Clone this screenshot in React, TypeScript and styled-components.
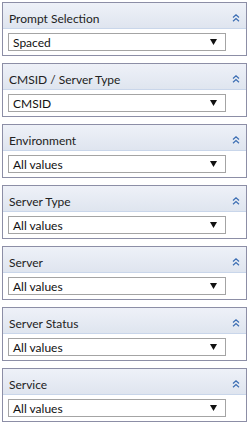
import React from 'react';
import styled, { createGlobalStyle } from 'styled-components';

const GlobalStyle = createGlobalStyle`
  html, body {
    margin: 0;
    padding: 0;
    background: #ffffff;
  }
  body {
    font-family: Lato, 'Liberation Sans', Arial, sans-serif;
  }
`;

type Prompt = {
  title: string;
  value: string;
};

const prompts: Prompt[] = [
  { title: 'Prompt Selection', value: 'Spaced' },
  { title: 'CMSID / Server Type', value: 'CMSID' },
  { title: 'Environment', value: 'All values' },
  { title: 'Server Type', value: 'All values' },
  { title: 'Server', value: 'All values' },
  { title: 'Server Status', value: 'All values' },
  { title: 'Service', value: 'All values' },
];

const CollapseIcon = () => (
  <svg width="8" height="8" viewBox="0 0 8 8">
    <path d="M1 3.5 L4 0.8 L7 3.5" fill="none" stroke="#3b6db3" strokeWidth="1.2" />
    <path d="M1 7.2 L4 4.5 L7 7.2" fill="none" stroke="#3b6db3" strokeWidth="1.2" />
  </svg>
);

const DropArrow = () => (
  <svg width="7" height="6" viewBox="0 0 7 6">
    <polygon points="0,0 7,0 3.5,6" fill="#111111" />
  </svg>
);

const App = () => {
  return (
    <>
      <GlobalStyle />
      <StList>
        {prompts.map((p) => (
          <StPanel key={p.title}>
            <StHeader>
              <StTitle>{p.title}</StTitle>
              <StToggle>
                <CollapseIcon />
              </StToggle>
            </StHeader>
            <StBody>
              <StSelect>
                <StValue>{p.value}</StValue>
                <StArrow>
                  <DropArrow />
                </StArrow>
              </StSelect>
            </StBody>
          </StPanel>
        ))}
      </StList>
    </>
  );
};

export default App;

const StList = styled.div`
  display: flex;
  flex-direction: column;
  gap: 7px;
  padding: 2px 3px 0 2px;
  width: 250px;
  box-sizing: border-box;
`;

const StPanel = styled.div`
  border: 1px solid #8c8ea6;
  background: #ffffff;
  height: 54px;
  box-sizing: border-box;
  display: flex;
  flex-direction: column;
`;

const StHeader = styled.div`
  height: 26px;
  box-sizing: border-box;
  flex: none;
  display: flex;
  align-items: center;
  justify-content: space-between;
  padding: 5px 6px 0 6px;
  background: linear-gradient(to bottom, #eef1f8, #dfe5ef);
  border-bottom: 1px solid #c9d6ea;
`;

const StTitle = styled.span`
  font-size: 12px;
  color: #222222;
`;

const StToggle = styled.span`
  display: flex;
  align-items: center;
`;

const StBody = styled.div`
  padding: 4px 0 0 5px;
`;

const StSelect = styled.div`
  width: 218px;
  height: 18px;
  box-sizing: border-box;
  border: 1px solid #a4a4a4;
  background: #ffffff;
  display: flex;
  align-items: center;
  justify-content: space-between;
  padding: 0 8px 0 4px;
`;

const StValue = styled.span`
  font-size: 12px;
  color: #111111;
`;

const StArrow = styled.span`
  display: flex;
  align-items: center;
`;
